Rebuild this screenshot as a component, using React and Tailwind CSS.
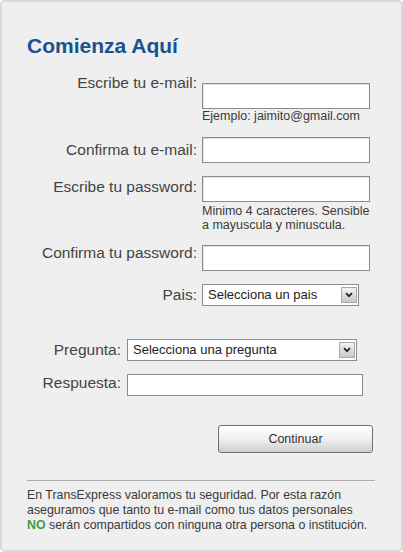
import React from 'react'

function Field({ className = '' }) {
  return <div className={`h-[26px] w-[168px] border border-[#8c8c8c] bg-white shadow-[inset_1px_1px_0_#e2e2e2] ${className}`} />
}

function Select({ text, className = '' }) {
  return (
    <div className={`flex h-[22px] items-center justify-between border border-[#8c8c8c] bg-white pl-[5px] pr-[1px] ${className}`}>
      <span className="text-[13px] leading-[16px] text-[#222]">{text}</span>
      <div className="flex h-[16px] w-[16px] items-center justify-center border border-[#a8a8a8] bg-gradient-to-b from-[#f2f2f2] to-[#c9c9c9]">
        <svg width="8" height="6" viewBox="0 0 8 6">
          <path d="M1 1.2 L4 4.2 L7 1.2" fill="none" stroke="#222" strokeWidth="1.8" />
        </svg>
      </div>
    </div>
  )
}

function Label({ children, className = '' }) {
  return <div className={`text-right text-[15.5px] leading-[18px] text-[#444] ${className}`}>{children}</div>
}

export default function App() {
  return (
    <div className="h-[552px] w-[403px] rounded-[5px] border-2 border-[#d9d9d9] bg-[#efefef] pl-[25px] pr-[26px] pt-[32px] font-['Liberation_Sans',Arial,sans-serif] text-[#3a3a3a]">
      <h1 className="text-[21px] font-bold leading-[24px] text-[#175291]">Comienza Aquí</h1>

      {/* email / password */}
      <div className="mt-[16px] flex items-start gap-[5px]">
        <Label className="w-[170px]">Escribe tu e-mail:</Label>
        <div className="mt-[9px]">
          <Field />
          <p className="text-[12.5px] leading-[14px]">Ejemplo: jaimito@gmail.com</p>
        </div>
      </div>

      <div className="mt-[14px] flex items-start gap-[5px]">
        <Label className="mt-[4px] w-[170px]">Confirma tu e-mail:</Label>
        <Field />
      </div>

      <div className="mt-[13px] flex items-start gap-[5px]">
        <Label className="mt-[2px] w-[170px]">Escribe tu password:</Label>
        <div>
          <Field />
          <p className="mt-[2px] text-[12.5px] leading-[14px]">
            Minimo 4 caracteres. Sensible
            <br />
            a mayuscula y minuscula.
          </p>
        </div>
      </div>

      <div className="mt-[12px] flex items-start gap-[5px]">
        <Label className="w-[170px]">Confirma tu password:</Label>
        <Field className="mt-[1px]" />
      </div>

      <div className="mt-[13px] flex items-start gap-[5px]">
        <Label className="mt-[2px] w-[170px]">Pais:</Label>
        <Select text="Selecciona un pais" className="w-[157px]" />
      </div>

      {/* pregunta secreta */}
      <div className="mt-[33px] flex items-start gap-[6px]">
        <Label className="mt-[2px] w-[94px]">Pregunta:</Label>
        <Select text="Selecciona una pregunta" className="w-[230px]" />
      </div>

      <div className="mt-[13px] flex items-start gap-[6px]">
        <Label className="w-[94px]">Respuesta:</Label>
        <div className="h-[22px] w-[236px] border border-[#8c8c8c] bg-white" />
      </div>

      <div className="mt-[29px] flex justify-end pr-[2px]">
        <button className="h-[28px] w-[155px] rounded-[3px] border border-[#6f6f6f] bg-gradient-to-b from-white via-[#f0f0f0] to-[#cfcfcf] text-[12.5px] text-[#333] shadow-[inset_0_1px_0_#fff]">
          Continuar
        </button>
      </div>

      <div className="mt-[27px] border-t border-[#adadad]" />

      <p className="mt-[7px] whitespace-nowrap text-[12.4px] leading-[15px] text-[#3a3a3a]">
        En TransExpress valoramos tu seguridad. Por esta razón
        <br />
        aseguramos que tanto tu e-mail como tus datos personales
        <br />
        <span className="font-bold text-[#3f9f3f]">NO</span> serán compartidos con ninguna otra persona o institución.
      </p>
    </div>
  )
}
